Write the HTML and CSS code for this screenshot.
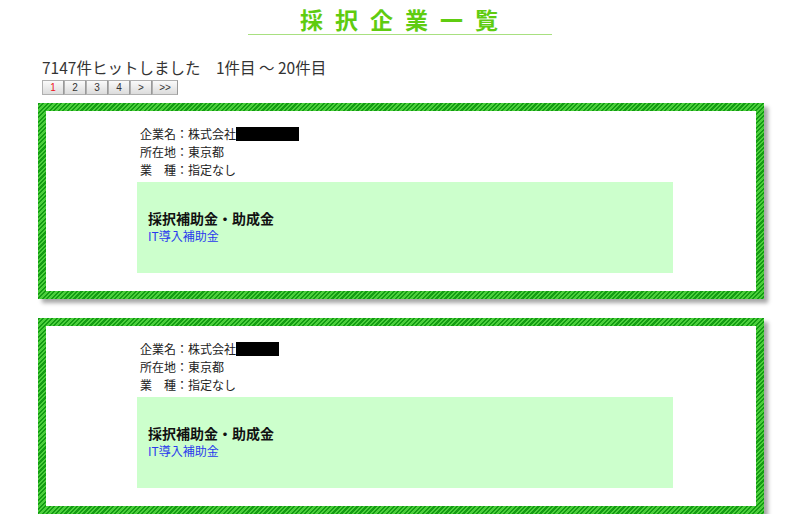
FILE: index.html
```html
<!DOCTYPE html>
<html lang="ja">
<head>
<meta charset="utf-8">
<title>採択企業一覧</title>
<link rel="stylesheet" href="styles.css">
</head>
<body>
<div class="page">
  <div class="title-wrap">
    <h1 class="title">採択企業一覧</h1>
  </div>
  <div class="hits">7147件ヒットしました　1件目 ～ 20件目</div>
  <div class="pager">
    <span class="pg current">1</span><span class="pg">2</span><span class="pg">3</span><span class="pg">4</span><span class="pg">&gt;</span><span class="pg wide">&gt;&gt;</span>
  </div>

  <div class="card">
    <div class="card-inner">
      <div class="info">
        <div>企業名：株式会社<span class="redact r1"></span></div>
        <div>所在地：東京都</div>
        <div>業　種：指定なし</div>
      </div>
      <div class="panel">
        <div class="panel-title">採択補助金・助成金</div>
        <a class="panel-link" href="#">IT導入補助金</a>
      </div>
    </div>
  </div>

  <div class="card">
    <div class="card-inner">
      <div class="info">
        <div>企業名：株式会社<span class="redact r2"></span></div>
        <div>所在地：東京都</div>
        <div>業　種：指定なし</div>
      </div>
      <div class="panel">
        <div class="panel-title">採択補助金・助成金</div>
        <a class="panel-link" href="#">IT導入補助金</a>
      </div>
    </div>
  </div>
</div>
</body>
</html>
```

FILE: styles.css
```css
html, body {
  margin: 0;
  padding: 0;
  background: #ffffff;
}
body {
  font-family: "Noto Sans CJK JP", "Noto Sans", "Liberation Sans", sans-serif;
  color: #222;
}
.page {
  width: 800px;
  padding-top: 4px;
}
.title-wrap {
  display: flex;
  justify-content: center;
}
.title {
  margin: 0;
  width: 304px;
  text-align: center;
  font-size: 23px;
  line-height: 30px;
  font-weight: bold;
  color: #5fcc10;
  letter-spacing: 12px;
  text-indent: 10px;
  border-bottom: 1px solid #a8e080;
}
.hits {
  margin: 23px 0 0 42px;
  font-size: 15.5px;
  line-height: 18px;
  color: #333;
}
.pager {
  display: flex;
  margin: 4px 0 0 42px;
}
.pg {
  box-sizing: border-box;
  width: 22px;
  height: 15px;
  border: 1px solid #b0b0b0;
  border-right-color: #999;
  background: linear-gradient(#fafafa, #dcdcdc);
  font-family: "Liberation Sans", Arial, sans-serif;
  font-size: 10px;
  line-height: 13px;
  text-align: center;
  color: #333;
}
.pg.wide {
  width: 26px;
}
.pg.current {
  color: #ee1122;
}
.card {
  margin: 8px 0 0 38px;
  width: 726px;
  height: 196px;
  box-sizing: border-box;
  padding: 8px;
  background: repeating-linear-gradient(135deg, #139c13 0 1.6px, #4ccf3c 1.6px 3.2px);
  box-shadow: 4px 4px 4px rgba(0, 0, 0, 0.35);
}
.card + .card {
  margin-top: 19px;
}
.card-inner {
  height: 100%;
  box-sizing: border-box;
  background: #fff;
  padding: 14px 0 0 91px;
}
.info {
  padding-left: 3px;
  font-size: 12px;
  line-height: 18px;
  color: #222;
}
.redact {
  display: inline-block;
  height: 14px;
  background: #000;
  vertical-align: -2px;
}
.r1 { width: 63px; }
.r2 { width: 43px; }
.panel {
  margin-top: 3px;
  width: 536px;
  height: 91px;
  box-sizing: border-box;
  background: #ccffcc;
  padding: 27px 11px 0;
}
.panel-title {
  font-size: 14px;
  line-height: 18px;
  font-weight: bold;
  color: #111;
}
.panel-link {
  display: block;
  font-size: 12px;
  line-height: 18px;
  color: #2a3aee;
  text-decoration: none;
}
```
